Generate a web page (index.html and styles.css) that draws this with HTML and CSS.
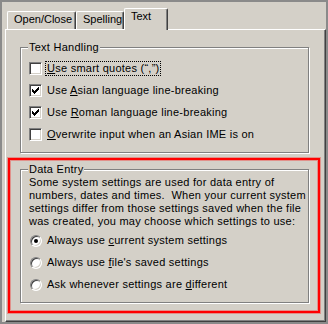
FILE: index.html
```
<!DOCTYPE html>
<html>
<head>
    <title>Options</title>
    <link rel="stylesheet" href="styles.css">
</head>
<body>
    <div class="window">
        <div class="tabs">
            <div class="tab tab-open">Open/Close</div>
            <div class="tab tab-spell">Spelling</div>
            <div class="tab tab-text active">Text</div>
        </div>

        <div class="panel">
            <fieldset class="group group-text">
                <legend>Text Handling</legend>
                <div class="row">
                    <span class="check"></span>
                    <span class="label focus"><u>U</u>se smart quotes (“,”)</span>
                </div>
                <div class="row">
                    <span class="check checked">
                        <svg width="7" height="7" viewBox="0 0 7 7"><path d="M0 2h1v3H0zM1 3h1v3H1zM2 4h1v3H2zM3 3h1v3H3zM4 2h1v3H4zM5 1h1v3H5zM6 0h1v3H6z" fill="#000"/></svg>
                    </span>
                    <span class="label">Use <u>A</u>sian language line-breaking</span>
                </div>
                <div class="row">
                    <span class="check checked">
                        <svg width="7" height="7" viewBox="0 0 7 7"><path d="M0 2h1v3H0zM1 3h1v3H1zM2 4h1v3H2zM3 3h1v3H3zM4 2h1v3H4zM5 1h1v3H5zM6 0h1v3H6z" fill="#000"/></svg>
                    </span>
                    <span class="label">Use <u>R</u>oman language line-breaking</span>
                </div>
                <div class="row">
                    <span class="check"></span>
                    <span class="label"><u>O</u>verwrite input when an Asian IME is on</span>
                </div>
            </fieldset>

            <div class="highlight">
                <fieldset class="group group-data">
                    <legend>Data Entry</legend>
                    <p class="note">
                        Some system settings are used for data entry of<br>
                        numbers, dates and times.&nbsp; When your current system<br>
                        settings differ from those settings saved when the file<br>
                        was created, you may choose which settings to use:
                    </p>
                    <div class="row">
                        <span class="radio checked"></span>
                        <span class="label">Always use <u>c</u>urrent system settings</span>
                    </div>
                    <div class="row">
                        <span class="radio"></span>
                        <span class="label">Always use <u>f</u>ile's saved settings</span>
                    </div>
                    <div class="row">
                        <span class="radio"></span>
                        <span class="label">Ask whenever settings are <u>d</u>ifferent</span>
                    </div>
                </fieldset>
            </div>
        </div>
    </div>
</body>
</html>
```

FILE: styles.css
```
body {
    margin: 0;
    background: #d4d0c8;
    font-family: "Liberation Sans", Arial, sans-serif;
    font-size: 11px;
    line-height: 13px;
    color: #000;
}
.window {
    width: 328px;
    height: 324px;
    box-sizing: border-box;
    border: 2px solid #8a8a8a;
    padding: 6px 0 0 3px;
    display: flex;
    flex-direction: column;
}
.tabs {
    display: flex;
    align-items: flex-end;
    height: 21px;
    padding-left: 2px;
}
.tab {
    box-sizing: border-box;
    height: 18px;
    padding: 1px 0 0 6px;
    border-top: 1px solid #fff;
    border-left: 1px solid #fff;
    border-right: 1px solid #404040;
    border-radius: 2px 2px 0 0;
    box-shadow: inset -1px 0 0 #808080;
}
.tab-open { width: 69px; }
.tab-spell { width: 48px; }
.tab-text { width: 44px; }
.tab.active {
    height: 22px;
    margin-bottom: -1px;
    position: relative;
    z-index: 1;
    background: #d4d0c8;
}
.panel {
    flex: 1;
    letter-spacing: 0.25px;
    border-top: 1px solid #fff;
    border-left: 1px solid #fff;
    border-right: 1px solid #404040;
    border-bottom: 1px solid #404040;
    box-shadow: inset -1px -1px 0 #808080;
    padding: 11px 0 0 2px;
}
.group {
    margin: 0;
    width: 289px;
    box-sizing: border-box;
    min-inline-size: 0;
    border: 1px solid #808080;
    box-shadow: 1px 1px 0 #fff, inset 1px 1px 0 #fff;
    padding: 0 0 11px 8px;
}
.group legend {
    padding: 0 1px;
    margin-left: -1px;
    background: #d4d0c8;
}
.group-text {
    margin-left: 12px;
    padding-top: 8px;
}
.highlight {
    width: 312px;
    box-sizing: border-box;
    margin-top: 5px;
    border: 2px solid #f00;
    box-shadow: 0 0 0 1px rgba(255, 0, 0, 0.3), inset 0 0 0 1px rgba(255, 0, 0, 0.3);
}
.group-data {
    margin: 3px 0 8px 10px;
}
.note {
    margin: 0 0 6px 0;
    white-space: nowrap;
}
.row {
    display: flex;
    align-items: center;
    height: 13px;
    margin-bottom: 9px;
}
.row:last-child {
    margin-bottom: 0;
}
.label {
    margin-left: 5px;
    white-space: nowrap;
}
.label.focus {
    margin-left: 4px;
    padding: 0 1px;
    outline: 1px dotted #000;
}
.check {
    width: 13px;
    height: 13px;
    box-sizing: border-box;
    border: 1px solid;
    border-color: #808080 #fff #fff #808080;
    box-shadow: inset 1px 1px 0 #404040, inset -1px -1px 0 #d4d0c8;
    background: #fff;
    display: flex;
    align-items: center;
    justify-content: center;
}
.check svg {
    display: block;
}
.radio {
    position: relative;
    width: 12px;
    height: 12px;
    margin-left: 1px;
    box-sizing: border-box;
    border-radius: 50%;
    border: 1px solid;
    border-color: #808080 #fff #fff #808080;
    box-shadow: inset 1px 1px 0 #404040, inset -1px -1px 0 #d4d0c8;
    background: #fff;
}
.radio.checked::after {
    content: "";
    position: absolute;
    left: 3px;
    top: 3px;
    width: 4px;
    height: 4px;
    border-radius: 50%;
    background: #000;
}
u {
    text-underline-offset: 1px;
}
```
